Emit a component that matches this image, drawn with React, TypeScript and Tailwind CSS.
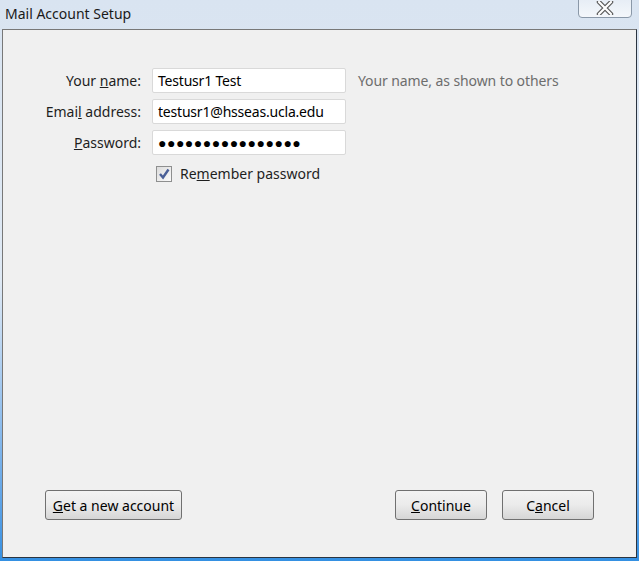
import React from 'react';

const font = { fontFamily: '"Noto Sans", "Segoe UI", sans-serif' };

function Field({ label, children }: { label: React.ReactNode; children: React.ReactNode }) {
  return (
    <div className="flex items-center h-[25px]">
      <div className="w-[138px] text-right text-[14px] text-[#1e1e1e] whitespace-nowrap">{label}</div>
      <div className="ml-[11px] flex items-center">{children}</div>
    </div>
  );
}

function TextBox({ value, password }: { value: string; password?: boolean }) {
  return (
    <div className="w-[194px] h-[25px] bg-white border border-[#d9d9d9] rounded-[2px] flex items-center px-[5px] text-[14px] tracking-[-0.2px] text-black whitespace-nowrap overflow-hidden">
      {password ? <span className="tracking-[0.5px] text-[14px]">{'●'.repeat(16)}</span> : value}
    </div>
  );
}

function Button({ children, className }: { children: React.ReactNode; className?: string }) {
  return (
    <button className={"h-[30px] rounded-[3px] border border-[#707070] bg-gradient-to-b from-[#f3f3f3] via-[#ebebeb] to-[#d6d6d6] text-[14px] text-black flex items-center justify-center " + (className ?? '')}>
      {children}
    </button>
  );
}

export default function App() {
  return (
    <div className="w-[639px] h-[561px] flex flex-col bg-gradient-to-b from-[#d9e4f1] via-[#dfe9f4] to-[#3490e2] overflow-hidden" style={font}>
      {/* title bar */}
      <div className="h-[29px] flex items-start justify-between relative">
        <div className="pl-[5px] pt-[3px] text-[14px] text-[#1a1a1a]">Mail Account Setup</div>
        <div className="absolute right-[7px] top-[-2px] w-[54px] h-[20px] rounded-b-[4px] border border-[#8a98a8] bg-gradient-to-b from-[#e6edf5] to-[#f4f7fb] flex items-center justify-center">
          <svg width="18" height="14" viewBox="0 0 18 14">
            <path d="M3 1 L15 13 M15 1 L3 13" stroke="#5b5b5b" strokeWidth="4.5" strokeLinecap="round" />
            <path d="M3 1 L15 13 M15 1 L3 13" stroke="#ffffff" strokeWidth="2.2" strokeLinecap="round" />
          </svg>
        </div>
      </div>
      {/* client area */}
      <div className="flex-1 mx-[2px] mb-[3px] flex flex-col bg-[#f0f0f0] border-t border-l border-[#787878] border-r border-b border-r-[#2b3440] border-b-[#2b3440]">
        <div className="pt-[38px] flex flex-col gap-[6px]">
          <div className="flex items-center">
            <Field label={<>Your <span className="underline">n</span>ame:</>}>
              <TextBox value="Testusr1 Test" />
            </Field>
            <span className="ml-[12px] text-[14px] tracking-[-0.1px] text-[#6d6d6d]">Your name, as shown to others</span>
          </div>
          <Field label={<>Emai<span className="underline">l</span> address:</>}>
            <TextBox value="testusr1@hsseas.ucla.edu" />
          </Field>
          <Field label={<><span className="underline">P</span>assword:</>}>
            <TextBox value="" password />
          </Field>
          <div className="flex items-center h-[25px] pl-[153px]">
            <div className="w-[16px] h-[16px] border border-[#8e8f8f] bg-gradient-to-br from-[#dcdcdc] to-[#fafafa] flex items-center justify-center">
              <svg width="12" height="12" viewBox="0 0 12 12">
                <path d="M2 6 L5 9.5 L10.5 1.5" stroke="#4a5f97" strokeWidth="2.4" fill="none" />
              </svg>
            </div>
            <span className="ml-[8px] text-[14px] text-[#1e1e1e]">Re<span className="underline">m</span>ember password</span>
          </div>
        </div>
        <div className="flex-1" />
        <div className="flex items-center pl-[42px] pr-[42px] pb-[37px]">
          <Button className="w-[137px]"><span className="underline">G</span>et a new account</Button>
          <div className="flex-1" />
          <Button className="w-[92px]"><span className="underline">C</span>ontinue</Button>
          <Button className="w-[92px] ml-[15px]">C<span className="underline">a</span>ncel</Button>
        </div>
      </div>
    </div>
  );
}
